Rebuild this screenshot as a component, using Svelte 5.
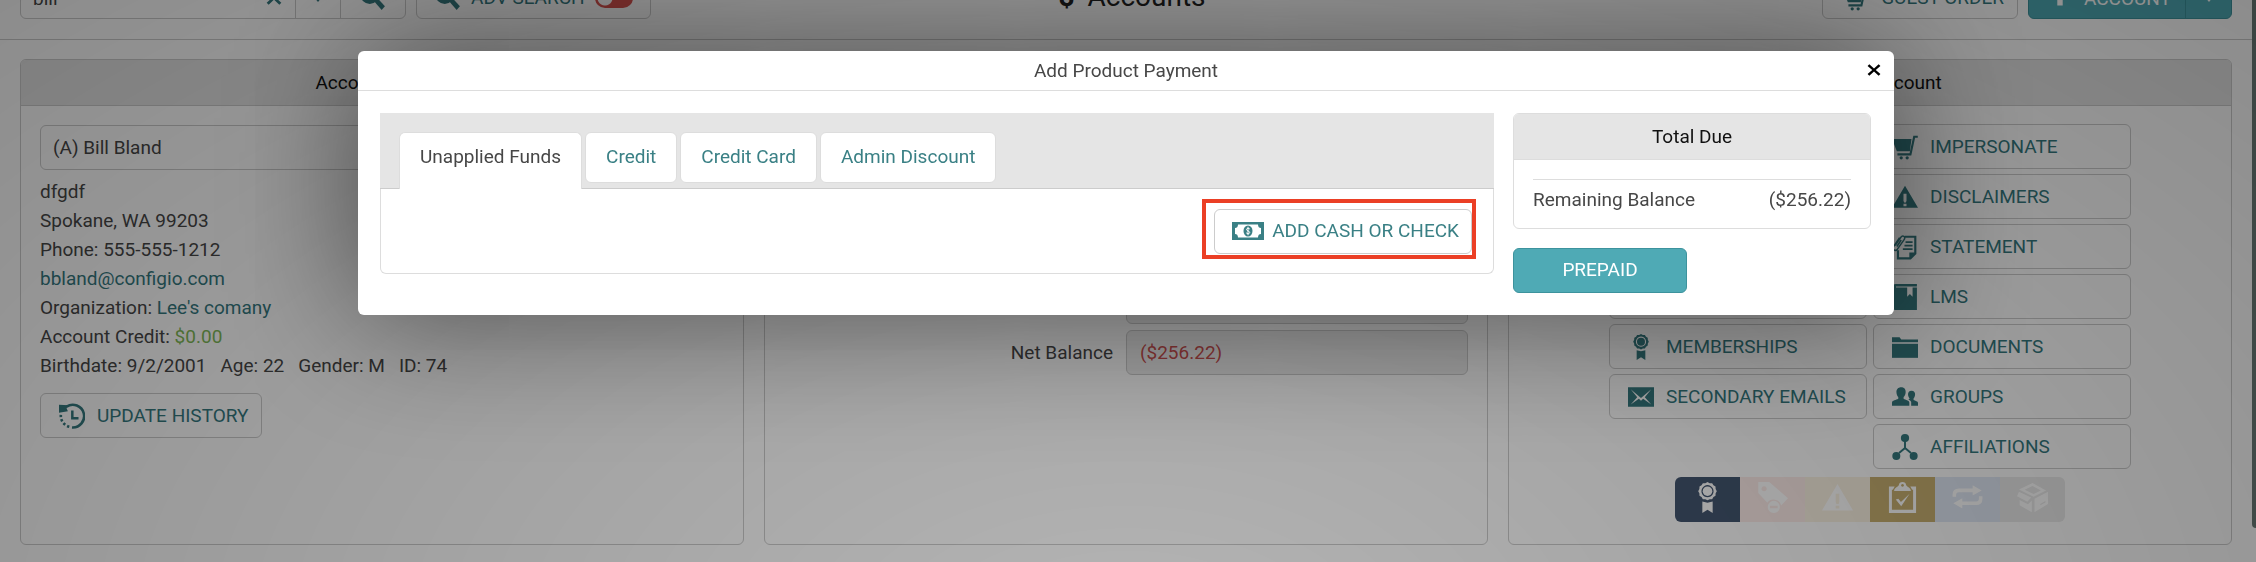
<script lang="ts">
  type Action = { icon: string; label: string; column: number; row: number };

  let search = $state("bill");
  let advanced = $state(false);
  let open = $state(true);
  let activeTab = $state("Unapplied Funds");

  const tabs = ["Unapplied Funds", "Credit", "Credit Card", "Admin Discount"];

  const actions: Action[] = [
    { icon: "cart", label: "Impersonate", column: 2, row: 1 },
    { icon: "warning", label: "Disclaimers", column: 2, row: 2 },
    { icon: "statement", label: "Statement", column: 2, row: 3 },
    { icon: "", label: "", column: 1, row: 4 },
    { icon: "book", label: "LMS", column: 2, row: 4 },
    { icon: "ribbon", label: "Memberships", column: 1, row: 5 },
    { icon: "folder", label: "Documents", column: 2, row: 5 },
    { icon: "mail", label: "Secondary Emails", column: 1, row: 6 },
    { icon: "people", label: "Groups", column: 2, row: 6 },
    { icon: "nodes", label: "Affiliations", column: 2, row: 7 },
  ];

  const statuses = [
    { icon: "ribbon", tone: "navy" },
    { icon: "tag", tone: "pink" },
    { icon: "warning", tone: "sand" },
    { icon: "clipboard", tone: "gold" },
    { icon: "repeat", tone: "blue" },
    { icon: "box", tone: "grey" },
  ];

  // every icon is drawn on a 24 x 24 grid
  const icons: Record<string, string> = {
    search:
      '<circle cx="9" cy="9" r="6.5" fill="none" stroke="currentColor" stroke-width="4"/><path d="M13 15l3-3 7 7.5-3 3.5z"/>',
    cross: '<path d="M4 2L12 9.500 20 2l3 3-8 7 8 7-3 3-8-7.500L4 22l-3-3 8-7-8-7z"/>',
    plus: '<path d="M9.500 3h5v6H21v4h-6.500v6h-5v-6H3V9h6.500z"/>',
    caret: '<path d="M4 8h16l-8 10z"/>',
    cart:
      '<path d="M0 4.500h18l-1.500 11.500H4.500z"/><path d="M23.800 2.500h-3.300L17 18.800H5" fill="none" stroke="currentColor" stroke-width="2"/><circle cx="8.500" cy="22" r="1.500"/><circle cx="14" cy="22" r="1.500"/>',
    warning:
      '<path fill-rule="evenodd" d="M12 1.500L24 22H0zM10.600 9v6.500l.6 1.500h1.600l.6-1.500V9zM10.600 18.300v2.200h2.800v-2.200z"/>',
    statement:
      '<path d="M12 2.500h9.500V18l-4.500 4.500H5.500V15" fill="none" stroke="currentColor" stroke-width="2"/><path d="M21.500 17H16v5.500z"/><path d="M12.500 7.500H19M11.500 10.700H19M10 14h9" stroke="currentColor" stroke-width="1.500"/><path d="M3 10.500L8 3.200c2-2.700 5-.5 3.200 2L5 14c-1.800 2.300-5.300.4-3.600-2.300L7 3.500M4.500 11.500l4-6" fill="none" stroke="currentColor" stroke-width="1.400"/>',
    book:
      '<path fill-rule="evenodd" d="M3.500 0H23v2.200H3.700v1H23V24H3c-1.500 0-2.500-1-2.500-2.500V2.500C.5 1 1.700 0 3.500 0zM14 3.200v8.500l2.500-2.400 2.500 2.400V3.200z"/>',
    ribbon:
      '<path fill-rule="evenodd" d="M12 0l1.700.9 1.900 0 1 1.600 1.600 1 .1 1.900.9 1.700-.9 1.700-.1 1.900-1.600 1-1 1.600-1.900.1-1.700.8-1.700-.8-1.900-.1-1-1.600-1.600-1-.1-1.900L4.800 7.100l.9-1.700.1-1.900 1.600-1 1-1.600h1.900zM12 2.400a4.700 4.700 0 1 0 .01 0z"/><circle cx="12" cy="7.100" r="3.700"/><path d="M8 15l4 1 4-1v9l-4-2.500L8 24z"/>',
    folder: '<path d="M0 3h7l1.500 2H24v2.500H0z"/><path d="M0 9h24v13H0z"/>',
    mail:
      '<path fill-rule="evenodd" d="M0 3h24v18H0zM2.500 4.800l6 7.400-6 6.800L10 13.500l2 2 2-2 7.500 5.500-6-6.800 6-7.400L12 13z"/>',
    people:
      '<path d="M8.500 3c3 0 4.300 2 4.100 4.700-.1 1.900-.8 3.500-1.900 4.400v1.600c2 1.100 5 1.500 5.300 3.300V20H0v-3c.3-1.800 3.800-2.200 5.800-3.300v-1.600C4.800 11.200 4.200 9.600 4.100 7.700 4 5 5.500 3 8.500 3z"/><path d="M18 6.300c2.400 0 3.500 1.600 3.300 3.700-.1 1.400-.6 2.600-1.400 3.300v1.400c1.600.8 4.100 1.200 4.100 2.600V20h-6.300v-3.500c-.3-1-1.500-1.700-2.600-2.200.4-.3 1-.6 1.200-.9-.8-.8-1.400-2-1.500-3.400-.1-2.100.8-3.700 3.200-3.700z"/>',
    nodes:
      '<circle cx="12" cy="3.800" r="3.800"/><circle cx="4" cy="20.300" r="3.700"/><circle cx="20" cy="20.300" r="3.700"/><path d="M12 6v7l-5.500 4.500M12 13l5.500 4.500" fill="none" stroke="currentColor" stroke-width="1.800"/>',
    history:
      '<path d="M7 3.300A10.500 10.500 0 1 1 12 22.600" fill="none" stroke="currentColor" stroke-width="2.400"/><path d="M0 1.500l9 .5-2 2.800 1.200 2.900L0 9z"/><path d="M12.300 7v7H18" fill="none" stroke="currentColor" stroke-width="2.300"/><path d="M9.500 22A10.500 10.500 0 0 1 1.700 11" fill="none" stroke="currentColor" stroke-width="2.400" stroke-dasharray="2.200 2"/>',
    tag:
      '<path fill-rule="evenodd" d="M1 0h8.500L24 12.500l-5.300 5.700A6 6 0 0 0 8 16L1 8.500zM5.500 3.200a2 2 0 1 0 .01 0z"/><path fill-rule="evenodd" d="M13 14.600a4.700 4.700 0 1 1-.01 0zM10 18.400v1.900h6v-1.900z"/>',
    clipboard:
      '<path fill-rule="evenodd" d="M1.500 3.500H6L4.500 6H3.800v15.500h16.400V6h-.7L18 3.500h4.500V24h-21z"/><path fill-rule="evenodd" d="M12 0c1.600 0 2.700 1 2.800 2.300.1 1.200 3.700 1.900 3.700 4.700h-13c0-2.800 3.600-3.500 3.700-4.700C9.300 1 10.400 0 12 0zM12 1.500a1.100 1.100 0 1 0 .01 0z"/><path d="M6.800 13.500l2-.5 2 2.500L17.500 9 11 18.700z"/>',
    repeat:
      '<path d="M1.800 11.500V10c0-2.200 1.300-3.500 3.500-3.500H17M22.200 11v2c0 2.200-1.300 3.500-3.500 3.500H7" fill="none" stroke="currentColor" stroke-width="2.800"/><path d="M16 2.500l7 4-7 4zM8 12.500l-7 4 7 4z"/>',
    box:
      '<path d="M12 .8l10.500 5.700-9.700 5L1.500 5.800zM12 3l-6 3 6.800 3.200L18.500 6.500z" fill-rule="evenodd"/><path d="M1.500 7.500L11 12l-3 3.300L0 11z"/><path d="M2 14l6.500 3.300 3-3V23.500L2 18z"/><path fill-rule="evenodd" d="M13.500 13L24 7.500V17l-10.500 6.500zM18 18l4-2.200v-1L18 17z"/>',
  };
</script>

{#snippet icon(name: string)}
  <svg class="icon" viewBox="0 0 24 24" aria-hidden="true">{@html icons[name]}</svg>
{/snippet}

<div class="page">
  <header>
    <div class="tools">
      <div class="search">
        <input type="text" aria-label="Search" bind:value={search} />
        <button class="clear" aria-label="Clear" onclick={() => (search = "")}>{@render icon("cross")}</button>
        <button class="more" aria-label="Options">{@render icon("caret")}</button>
        <button class="go" aria-label="Search">{@render icon("search")}</button>
      </div>
      <label class="button advanced">
        {@render icon("search")}
        ADV SEARCH
        <input type="checkbox" bind:checked={advanced} />
      </label>
    </div>
    <h1><b>$</b> Accounts</h1>
    <div class="tools right">
      <button class="button guest">{@render icon("cart")}GUEST ORDER</button>
      <div class="split">
        <button class="add">{@render icon("plus")}ACCOUNT</button>
        <button class="more" aria-label="More">{@render icon("caret")}</button>
      </div>
    </div>
  </header>

  <main>
    <section class="card">
      <h2>Account Details</h2>
      <div class="body">
        <div class="field">(A) Bill Bland</div>
        <div class="details">
          <div>dfgdf</div>
          <div>Spokane, WA 99203</div>
          <div>Phone: 555-555-1212</div>
          <div><a href="mailto:bbland@configio.com">bbland@configio.com</a></div>
          <div>Organization: <a href="#organization">Lee's comany</a></div>
          <div>Account Credit: <span class="credit">$0.00</span></div>
          <div class="facts">
            <span>Birthdate: 9/2/2001</span>
            <span>Age: 22</span>
            <span>Gender: M</span>
            <span>ID: 74</span>
          </div>
        </div>
        <button class="button">{@render icon("history")}UPDATE HISTORY</button>
      </div>
    </section>

    <section class="card">
      <h2>&nbsp;</h2>
      <div class="body balances">
        {#each Array(4) as _}
          <div class="balance"><span></span><output></output></div>
        {/each}
        <div class="balance">
          <label for="net">Net Balance</label>
          <output id="net">($256.22)</output>
        </div>
      </div>
    </section>

    <section class="card">
      <h2>Manage Account</h2>
      <div class="body manage">
        <div class="actions">
          {#each actions as action}
            <button class="button" style="grid-column: {action.column}; grid-row: {action.row}">
              {#if action.icon}{@render icon(action.icon)}{/if}
              {action.label.toUpperCase()}
            </button>
          {/each}
        </div>
        <div class="statuses">
          {#each statuses as status}
            <button class={status.tone} aria-label={status.icon}>{@render icon(status.icon)}</button>
          {/each}
        </div>
      </div>
    </section>
  </main>
  <div class="scrollbar"></div>
</div>

{#if open}
  <div class="backdrop">
    <div class="modal" role="dialog" aria-labelledby="modal-title">
      <div class="modal-header">
        <h3 id="modal-title">Add Product Payment</h3>
        <button class="close" aria-label="Close" onclick={() => (open = false)}>{@render icon("cross")}</button>
      </div>
      <div class="modal-body">
        <div class="funds">
          <div class="tabs" role="tablist">
            {#each tabs as tab}
              <button
                role="tab"
                class:active={tab === activeTab}
                aria-selected={tab === activeTab}
                onclick={() => (activeTab = tab)}>{tab}</button>
            {/each}
          </div>
          <div class="panel" role="tabpanel">
            <div class="highlight">
              <button class="button cash">
                <svg viewBox="0 0 32 24" aria-hidden="true">
                  <path fill-rule="evenodd" d="M0 3h32v18H0zM6 5.500C6 8 4.800 9 3 9v6c1.800 0 3 1 3 3.500h20c0-2.500 1.200-3.500 3-3.500V9c-1.800 0-3-1-3-3.500z" />
                  <ellipse cx="16" cy="12" rx="4.500" ry="5.500" />
                  <path d="M17.800 10c-.8-1-3.300-.9-3.300.5 0 1.700 3.200 1.200 3.200 3 0 1.500-2.700 1.500-3.500.3M16 7.800v8.400" fill="none" stroke="#fff" stroke-width="1" />
                </svg>
                ADD CASH OR CHECK
              </button>
            </div>
          </div>
        </div>
        <aside>
          <div class="card">
            <h2>Total Due</h2>
            <div class="due">
              <span>Remaining Balance</span>
              <span>($256.22)</span>
            </div>
          </div>
          <button class="prepaid">PREPAID</button>
        </aside>
      </div>
    </div>
  </div>
{/if}

<style>
  :global(body) {
    margin: 0;
    background: #fff;
  }

  .page,
  .backdrop {
    --teal: #35797f;
    --line: #ccc;

    box-sizing: border-box;
    font: 19px/29px Roboto, sans-serif;
    color: #474747;
  }

  .page *,
  .backdrop * {
    box-sizing: border-box;
  }

  .page {
    position: relative;
    height: 100vh;
    overflow: hidden;
    padding-right: 4px;
  }

  button,
  input {
    font: inherit;
    color: inherit;
    margin: 0;
    padding: 0;
    border: 0;
    background: none;
  }

  h1,
  h2,
  h3 {
    margin: 0;
    font-weight: 400;
  }

  a {
    color: var(--teal);
    text-decoration: none;
  }

  svg {
    flex: none;
    fill: currentColor;
  }

  .icon {
    width: 26px;
    height: 26px;
  }

  .button {
    display: inline-flex;
    align-items: center;
    gap: 12px;
    height: 45px;
    padding: 0 13px 0 18px;
    color: var(--teal);
    white-space: nowrap;
    border: 1px solid var(--line);
    border-radius: 6px;
  }

  /* the page is scrolled a little, so the toolbar starts above the window */
  header {
    display: grid;
    grid-template-columns: 1fr auto 1fr;
    align-items: center;
    margin: -26px -4px 0 0;
    padding: 0 24px 20px 20px;
    border-bottom: 1px solid var(--line);
  }

  .tools {
    display: flex;
    gap: 10px;
  }

  .right {
    justify-content: flex-end;
  }

  .search {
    display: flex;
    width: 386px;
    height: 45px;
    border: 1px solid var(--line);
    border-radius: 6px;
    color: var(--teal);
  }

  .search input {
    flex: 1;
    min-width: 0;
    padding: 3px 0 0 12px;
    color: #474747;
  }

  .search button,
  .split button {
    display: flex;
    align-items: center;
    justify-content: center;
    padding-top: 3px;
  }

  .clear {
    width: 42px;
  }

  .clear .icon {
    width: 16px;
    height: 16px;
  }

  .search .more {
    width: 46px;
    border: solid var(--line);
    border-width: 0 1px;
  }

  .more .icon {
    width: 16px;
    height: 16px;
  }

  .go {
    width: 64px;
  }

  .advanced input {
    appearance: none;
    width: 38px;
    height: 20px;
    border-radius: 10px;
    background: radial-gradient(circle at 10px 10px, #fff 7px, #d9534f 8px);
  }

  .advanced {
    gap: 10px;
    padding-right: 17px;
  }

  h1 {
    padding-left: 12px;
    font-size: 28px;
    color: #222;
  }

  h1 b {
    margin-right: 6px;
  }

  .guest {
    padding-left: 20px;
  }

  .guest,
  .advanced {
    padding-top: 2px;
  }

  .split {
    display: flex;
    height: 45px;
    color: #fff;
    background: #4faab5;
    border: 1px solid #3d939d;
    border-radius: 6px;
  }

  .split .add {
    gap: 11px;
    padding: 3px 14px 0 18px;
  }

  .split .more {
    width: 46px;
    border-left: 1px solid #3d939d;
  }

  main {
    display: grid;
    grid-template-columns: repeat(3, minmax(0, 1fr));
    gap: 20px;
    padding: 19px 20px;
  }

  .card {
    border: 1px solid var(--line);
    border-radius: 6px;
  }

  .card h2 {
    padding: 8px 0;
    font-size: 19px;
    line-height: 29px;
    text-align: center;
    color: #111;
    background: #e5e5e5;
    border-bottom: 1px solid var(--line);
    border-radius: 5px 5px 0 0;
  }

  .body {
    padding: 19px 19px 22px;
  }

  .manage {
    padding-top: 18px;
  }

  .field,
  output {
    display: block;
    height: 45px;
    padding: 7px 12px;
    border: 1px solid var(--line);
    border-radius: 6px;
  }

  .details {
    padding: 7px 0 13px;
  }

  .credit {
    color: #7fb958;
  }

  .facts {
    display: flex;
    gap: 14px;
  }

  .balances {
    display: grid;
    align-content: start;
    gap: 6px;
    padding-top: 20px;
  }

  .balance {
    display: grid;
    grid-template-columns: 1fr 1fr;
    align-items: center;
  }

  .balance label {
    padding-right: 13px;
    text-align: right;
  }

  output {
    padding-left: 13px;
    color: #c94f4f;
    background: #eee;
  }

  .actions {
    display: grid;
    grid-template-columns: 258px 258px;
    grid-template-rows: repeat(7, 45px);
    justify-content: center;
    gap: 5px 6px;
  }

  .statuses {
    display: flex;
    justify-content: center;
    margin-top: 8px;
  }

  .statuses button {
    width: 65px;
    height: 45px;
    padding-bottom: 4px;
    color: #fff;
  }

  .statuses .icon {
    display: block;
    width: 31px;
    height: 31px;
    margin: 0 auto;
  }

  .statuses .navy {
    background: #445771;
    border-radius: 6px 0 0 6px;
  }

  .statuses .pink {
    background: #fdecea;
  }

  .statuses .sand {
    background: #fbf2e3;
  }

  .statuses .gold {
    background: #c8b071;
  }

  .statuses .blue {
    background: #e0e8f5;
  }

  .statuses .grey {
    background: #ebebeb;
    border-radius: 0 6px 6px 0;
  }

  .scrollbar {
    position: absolute;
    top: 0;
    right: 0;
    width: 4px;
    height: 94%;
    background: #6c7c78;
    border-radius: 0 0 0 4px;
  }

  .backdrop {
    position: fixed;
    inset: 0;
    padding: 51px 4px 0 0;
    background: radial-gradient(71% 164% at 50% 116%, rgb(0 0 0 / 29%), rgb(0 0 0 / 45%));
  }

  .modal {
    width: 90%;
    max-width: 1536px;
    margin: 0 auto;
    background: #fff;
    border-radius: 6px;
    box-shadow: 0 0 140px rgb(0 0 0 / 54%);
  }

  .modal-header {
    position: relative;
    padding: 5px 0;
    border-bottom: 1px solid #ddd;
  }

  h3 {
    font-size: 19px;
    text-align: center;
  }

  .close {
    position: absolute;
    top: 12px;
    right: 13px;
    color: #000;
  }

  .close .icon {
    display: block;
    width: 14px;
    height: 14px;
  }

  .modal-body {
    --teal: #3a8085;

    display: grid;
    grid-template-columns: minmax(0, 1fr) 358px;
    align-items: start;
    gap: 19px;
    padding: 22px 23px 22px 22px;
  }

  .tabs {
    display: flex;
    gap: 3px;
    height: 76px;
    padding: 19px 19px 0;
    background: #e5e5e5;
    border-bottom: 1px solid var(--line);
  }

  .tabs button {
    height: 51px;
    padding: 0 20px 2px;
    color: var(--teal);
    background: #fff;
    border: 1px solid #ddd;
    border-radius: 6px;
  }

  .tabs .active {
    height: 57px;
    padding-bottom: 9px;
    color: #474747;
    border-bottom: 0;
    border-radius: 6px 6px 0 0;
  }

  .panel {
    display: flex;
    justify-content: flex-end;
    padding: 20px 21px 19px;
    border: 1px solid #ddd;
    border-top: 0;
    border-radius: 0 0 6px 6px;
  }

  .highlight {
    position: relative;
  }

  .highlight::after {
    content: "";
    position: absolute;
    inset: -10px -4px -5px -12px;
    border: 4px solid #eb3f25;
    pointer-events: none;
  }

  .highlight .button {
    gap: 8px;
    padding: 0 12px 2px 17px;
  }

  .cash svg {
    width: 32px;
    height: 24px;
  }

  aside .card {
    border-color: #ddd;
  }

  aside .card h2 {
    border-color: #ddd;
  }

  .due {
    display: flex;
    justify-content: space-between;
    margin: 19px 19px 14px;
    padding-top: 5px;
    border-top: 1px solid #ddd;
  }

  .prepaid {
    width: 174px;
    height: 45px;
    margin-top: 19px;
    padding-bottom: 2px;
    color: #fff;
    background: #4faab5;
    border: 1px solid #3d939d;
    border-radius: 6px;
  }
</style>
